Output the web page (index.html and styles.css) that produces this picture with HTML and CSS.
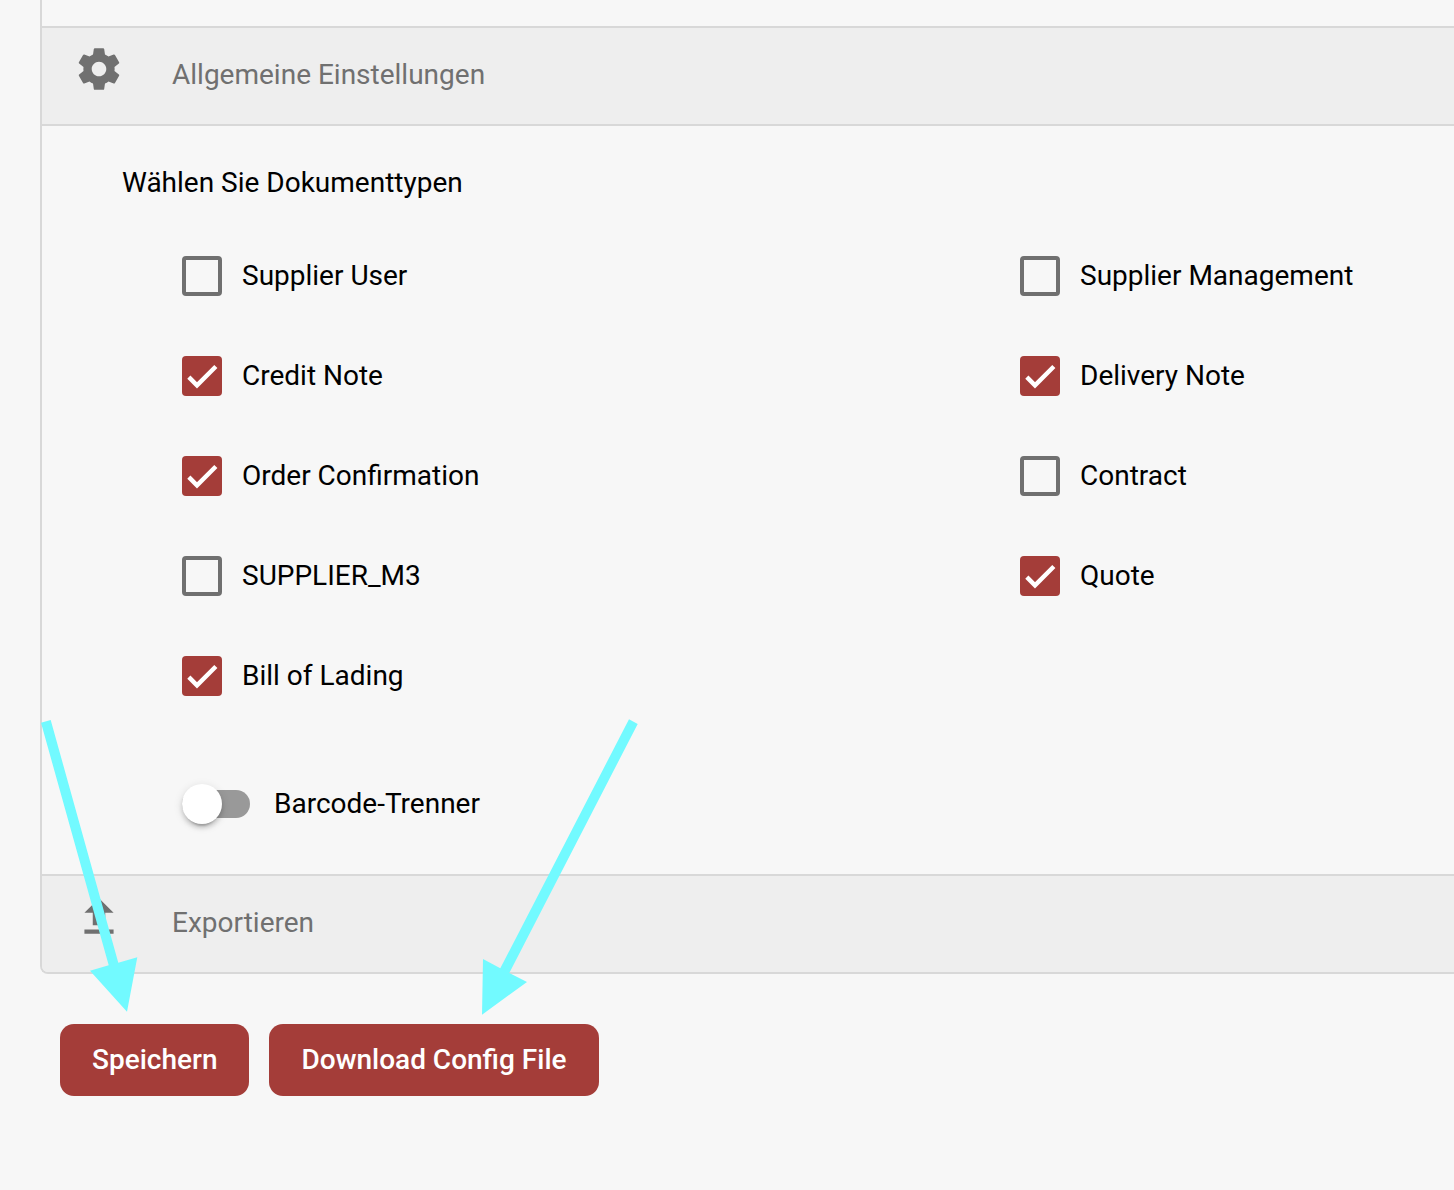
FILE: index.html
```html
<!DOCTYPE html>
<html lang="de">
<head>
<meta charset="utf-8">
<title>Einstellungen</title>
<link rel="stylesheet" href="styles.css">
</head>
<body>
<svg class="sprite" width="0" height="0" aria-hidden="true">
  <symbol id="check" viewBox="0 0 24 24"><path d="M4.1 12.7 9 17.6 20.3 6.3" fill="none" stroke="#fff" stroke-width="2.67"/></symbol>
</svg>
<main class="panel">
  <div class="panel-top"></div>
  <header class="section-head">
    <svg class="section-icon" viewBox="0 0 24 24"><path d="M19.43 12.98c.04-.32.07-.64.07-.98s-.03-.66-.07-.98l2.11-1.65c.19-.15.24-.42.12-.64l-2-3.46c-.12-.22-.39-.3-.61-.22l-2.49 1c-.52-.4-1.08-.73-1.69-.98l-.38-2.65C14.46 2.18 14.25 2 14 2h-4c-.25 0-.46.18-.49.42l-.38 2.65c-.61.25-1.17.59-1.69.98l-2.49-1c-.23-.09-.49 0-.61.22l-2 3.46c-.13.22-.07.49.12.64l2.11 1.65c-.04.32-.07.65-.07.98s.03.66.07.98l-2.11 1.65c-.19.15-.24.42-.12.64l2 3.46c.12.22.39.3.61.22l2.49-1c.52.4 1.08.73 1.69.98l.38 2.65c.03.24.24.42.49.42h4c.25 0 .46-.18.49-.42l.38-2.65c.61-.25 1.17-.59 1.69-.98l2.49 1c.23.09.49 0 .61-.22l2-3.46c.12-.22.07-.49-.12-.64l-2.11-1.65zM12 15.5c-1.93 0-3.5-1.57-3.5-3.5s1.57-3.5 3.5-3.5 3.5 1.57 3.5 3.5-1.57 3.5-3.5 3.5z"/></svg>
    <span class="section-title">Allgemeine Einstellungen</span>
  </header>
  <section class="section-body">
    <div class="group-title">Wählen Sie Dokumenttypen</div>
    <div class="types">
      <div class="option"><span class="box"></span><span>Supplier User</span></div>
      <div class="option"><span class="box"></span><span>Supplier Management</span></div>
      <div class="option"><span class="box checked"><svg><use href="#check"/></svg></span><span>Credit Note</span></div>
      <div class="option"><span class="box checked"><svg><use href="#check"/></svg></span><span>Delivery Note</span></div>
      <div class="option"><span class="box checked"><svg><use href="#check"/></svg></span><span>Order Confirmation</span></div>
      <div class="option"><span class="box"></span><span>Contract</span></div>
      <div class="option"><span class="box"></span><span>SUPPLIER_M3</span></div>
      <div class="option"><span class="box checked"><svg><use href="#check"/></svg></span><span>Quote</span></div>
      <div class="option"><span class="box checked"><svg><use href="#check"/></svg></span><span>Bill of Lading</span></div>
    </div>
    <div class="toggle-row"><span class="track"><span class="thumb"></span></span><span>Barcode-Trenner</span></div>
  </section>
  <header class="section-head last">
    <svg class="section-icon" viewBox="0 0 24 24"><path d="M9 16h6v-6h4l-7-7-7 7h4zm-4 2h14v2H5z"/></svg>
    <span class="section-title">Exportieren</span>
  </header>
</main>
<div class="actions">
  <button class="btn">Speichern</button>
  <button class="btn">Download Config File</button>
</div>
<svg class="arrows" viewBox="0 0 1454 1190" aria-hidden="true">
  <path d="M41 722.7 50.7 720 118.3 962.7 137.3 957.3 127 1011.7 90 970.7 108.7 965.3Z"/>
  <path d="M629 719.3 637.7 724 509.3 973 527 982 482 1014.7 483 959 500.3 968.3Z"/>
</svg>
</body>
</html>
```
FILE: styles.css
```css
* { box-sizing: border-box; }
body {
  margin: 0;
  height: 1190px;
  overflow: hidden;
  background: #f7f7f7;
  color: #000;
  font: 28px/40px Roboto, sans-serif;
}
.sprite { display: block; }
.panel {
  margin-left: 40px;
  border: solid #d8d8d8;
  border-width: 0 0 2px 2px;
  border-bottom-left-radius: 8px;
  overflow: hidden;
}
.panel-top { height: 26px; }
.section-head {
  display: flex;
  align-items: flex-start;
  gap: 48px;
  height: 100px;
  padding: 16px 0 0 32px;
  border: solid #d8d8d8;
  border-width: 2px 0;
  background: #eee;
  color: #707070;
}
.section-head.last { height: 98px; border-bottom: 0; }
.section-icon { width: 50px; height: 50px; fill: #707070; }
.section-title { padding-top: 11px; }
.section-body { height: 748px; padding: 37px 0 0 80px; }
.group-title { height: 40px; }
.types {
  display: grid;
  grid-template-columns: 838px 1fr;
  grid-auto-rows: 40px;
  row-gap: 60px;
  margin-top: 53px;
  padding-left: 60px;
}
.option { display: flex; gap: 20px; white-space: nowrap; }
.box {
  width: 40px;
  height: 40px;
  border: 4px solid #707070;
  border-radius: 4px;
}
.box.checked { border: 0; background: #a43d39; }
.box svg { display: block; width: 40px; height: 40px; }
.toggle-row {
  display: flex;
  align-items: center;
  gap: 24px;
  margin-top: 88px;
  padding-left: 60px;
}
.track {
  display: flex;
  align-items: center;
  width: 68px;
  height: 28px;
  border-radius: 14px;
  background: #999;
}
.thumb {
  flex: none;
  width: 40px;
  height: 40px;
  border-radius: 50%;
  background: #fff;
  box-shadow: 0 6px 2px -4px rgba(0,0,0,.2), 0 4px 4px rgba(0,0,0,.14), 0 2px 10px rgba(0,0,0,.12);
}
.actions { display: flex; gap: 20px; padding: 50px 0 0 60px; }
.btn {
  height: 72px;
  padding: 0 32px;
  border: 0;
  border-radius: 14px;
  background: #a43d39;
  color: #fff;
  font: 500 28px/72px Roboto, sans-serif;
}
.arrows {
  position: absolute;
  top: 0;
  left: 0;
  width: 1454px;
  height: 1190px;
  fill: #72faff;
  pointer-events: none;
}
```
